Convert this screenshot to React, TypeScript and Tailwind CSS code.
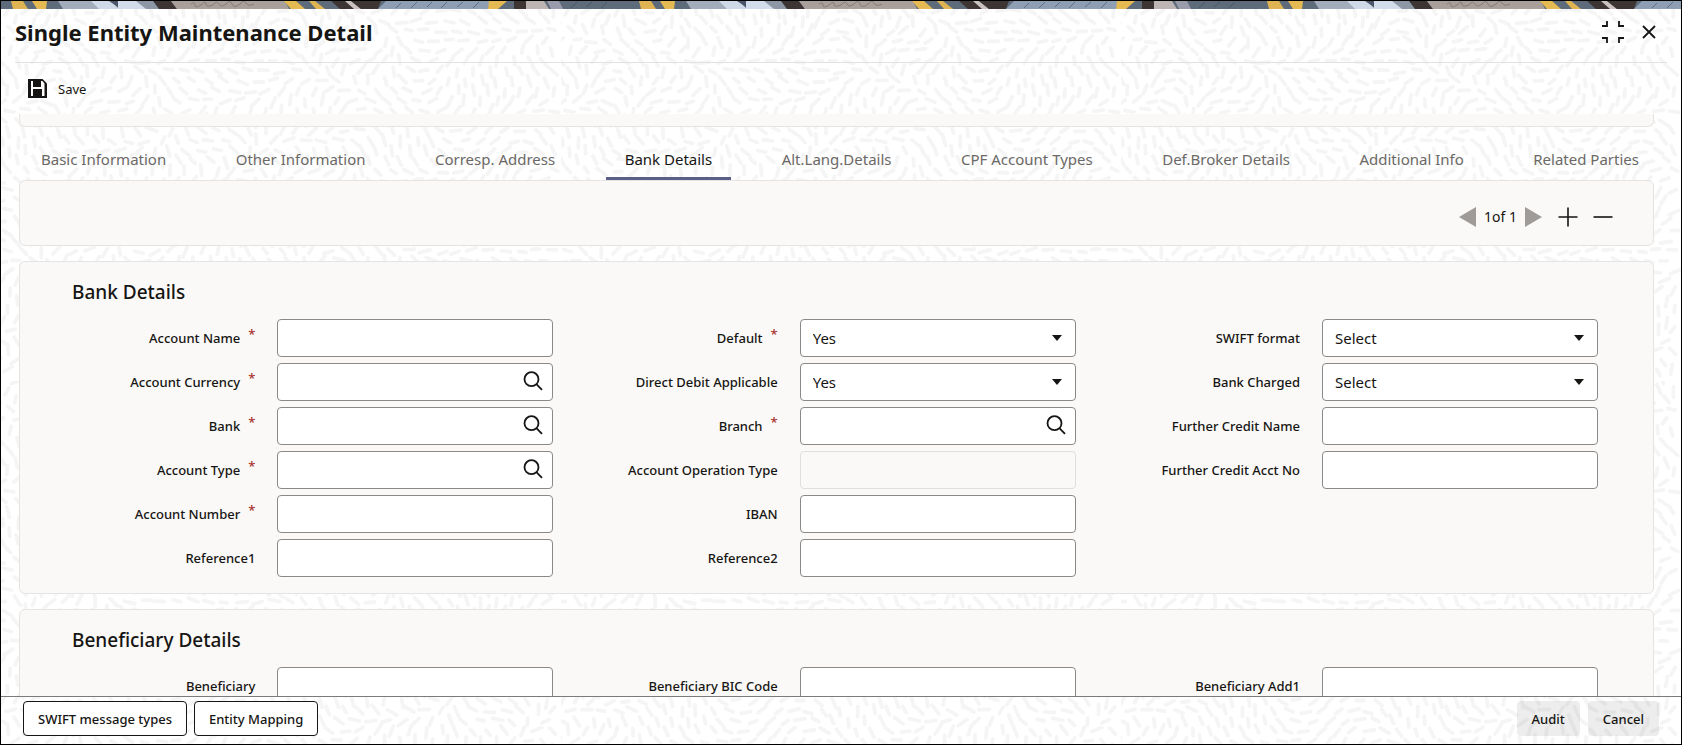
import { useId } from "react";
import type { ReactNode } from "react";

type FieldProps = {
  label: string;
  type?: "text" | "select" | "lookup";
  required?: boolean;
  disabled?: boolean;
  value?: string;
};

const tabs = [
  "Basic Information",
  "Other Information",
  "Corresp. Address",
  "Bank Details",
  "Alt.Lang.Details",
  "CPF Account Types",
  "Def.Broker Details",
  "Additional Info",
  "Related Parties",
];

const bankColumns: FieldProps[][] = [
  [
    { label: "Account Name", required: true },
    { label: "Account Currency", required: true, type: "lookup" },
    { label: "Bank", required: true, type: "lookup" },
    { label: "Account Type", required: true, type: "lookup" },
    { label: "Account Number", required: true },
    { label: "Reference1" },
  ],
  [
    { label: "Default", required: true, type: "select", value: "Yes" },
    { label: "Direct Debit Applicable", type: "select", value: "Yes" },
    { label: "Branch", required: true, type: "lookup" },
    { label: "Account Operation Type", disabled: true },
    { label: "IBAN" },
    { label: "Reference2" },
  ],
  [
    { label: "SWIFT format", type: "select", value: "Select" },
    { label: "Bank Charged", type: "select", value: "Select" },
    { label: "Further Credit Name" },
    { label: "Further Credit Acct No" },
  ],
];

const beneficiaryColumns: FieldProps[][] = [
  [{ label: "Beneficiary" }],
  [{ label: "Beneficiary BIC Code" }],
  [{ label: "Beneficiary Add1" }],
];

// short dashes that follow a slowly turning flow field, one tile
const TILE_W = 560;
const TILE_H = 380;

const buildDashes = () => {
  let d = "";
  let seed = 7;
  const rand = () => {
    seed = (seed * 16807) % 2147483647;
    return seed / 2147483647;
  };
  const tau = Math.PI * 2;
  for (let row = 0; row < 38; row++) {
    for (let col = 0; col < 35; col++) {
      const x = col * 16 + (row % 2) * 8 + rand() * 4 - 2;
      const y = row * 10 + rand() * 4 - 2;
      const u = (x / TILE_W) * tau;
      const v = (y / TILE_H) * tau;
      const a =
        1.3 * Math.sin(u * 2 + Math.cos(v * 2)) +
        1.2 * Math.cos(v * 3 + u) +
        0.6 * Math.sin(u * 4 - v * 2);
      const len = 3.5 + rand() * 2;
      const dx = Math.cos(a) * len;
      const dy = Math.sin(a) * len;
      d += `M${(x - dx).toFixed(1)} ${(y - dy).toFixed(1)}L${(x + dx).toFixed(1)} ${(y + dy).toFixed(1)}`;
    }
  }
  return d;
};

const dashes = buildDashes();

const Backdrop = () => (
  <svg className="absolute inset-0 -z-10 size-full" aria-hidden="true">
    <defs>
      <pattern id="dashes" width={TILE_W} height={TILE_H} patternUnits="userSpaceOnUse">
        <path d={dashes} stroke="#f5f5f5" strokeWidth="3.8" strokeLinecap="round" fill="none" />
      </pattern>
    </defs>
    <rect width="100%" height="100%" fill="url(#dashes)" />
  </svg>
);

const BrandStrip = () => (
  <svg className="block h-2 w-full shrink-0" aria-hidden="true">
    <defs>
      <pattern id="strip" width="628" height="8" patternUnits="userSpaceOnUse">
        <rect width="628" height="8" fill="#5d6b7a" />
        <path d="M10 0h12l5 8H12z" fill="#e0b452" />
        <path d="M31 0h15l-1 8h-9z" fill="#e5ba52" />
        <path d="M57 0h38l8 8H62z" fill="#a3acba" />
        <path d="M90 0h20l8 8h-20z" fill="#d0d9e8" />
        <path d="M108 0h9v6z" fill="#4b5569" />
        <path d="M117 0h22l9 8h-31z" fill="#d3dcea" />
        <path d="M135 0h18l8 8h-16z" fill="#8d97a5" />
        <path d="M152 0h18l6 8h-18z" fill="#3d3533" />
        <path d="M170 0h114l4 8H176z" fill="#aaa09b" />
        <path
          d="M190 3q4-3 4 1t6 0q5-5 5-1t7 1q4-5 6-1t7 0q4-5 6 0t8 0q4-5 6-1t8 1"
          stroke="#857b77"
          fill="none"
        />
        <path d="M283 0h12l9 8h-14z" fill="#e5ba52" />
        <path d="M308 0h6l10 8h-9z" fill="#e0b452" />
        <path d="M330 0h15l9 8h-15z" fill="#3d3533" />
        <path d="M344 0h6l10 8h-7z" fill="#c9c2c0" />
        <path d="M350 0h30l-3 8h-17z" fill="#3d3533" />
        <path d="M385 0h104l-2 8H377z" fill="#8f9fb3" />
        <path
          d="M395 7l5-5M410 7l6-6M426 6l5-5M440 7l6-6M456 6l6-5M472 7l6-6"
          stroke="#5f6f86"
        />
        <path d="M488 0h18l-9 8h-10z" fill="#e5ba52" />
        <path d="M513 0h12v8h-12z" fill="#3d3533" />
        <path d="M525 0h18l5 8h-23z" fill="#bdb5b3" />
        <path d="M546 0h12l4 8h-12z" fill="#9a9bab" />
        <path d="M570 7l6-6M585 6l6-5M600 7l6-6" stroke="#46566b" />
      </pattern>
    </defs>
    <rect width="100%" height="8" fill="url(#strip)" />
  </svg>
);

const SaveIcon = () => (
  <svg viewBox="0 0 19 19" className="size-[19px]" aria-hidden="true">
    <path d="M0 0h14.5L19 4.5V19H0z" fill="#161513" />
    <path d="M3 2h2v6h8V2h1.500l2 2.500V17H14v-7H5v7H3z" fill="#fff" />
  </svg>
);

const SearchIcon = () => (
  <svg viewBox="0 0 20 20" className="size-5" fill="none" stroke="#161513" strokeWidth="1.8">
    <circle cx="8.5" cy="8.2" r="7" />
    <path d="M13.4 13.2l5.6 5.6" />
  </svg>
);

const Field = ({ label, type = "text", required, disabled, value }: FieldProps) => {
  const id = useId();
  const box =
    "h-[38px] w-full rounded border border-[#8b8987] bg-white pl-3 text-[15px] text-[#161513] disabled:border-[#e1dfdd] disabled:bg-[#faf9f7]";

  return (
    <div className="grid grid-cols-[1fr_276px] items-center gap-x-[22px]">
      <label
        htmlFor={id}
        className="flex justify-end gap-2 text-[13px] leading-5 font-medium whitespace-nowrap text-[#161513]"
      >
        {label}
        {required && <span className="-mt-1 text-[#a8322a]">*</span>}
      </label>
      <div className="relative">
        {type === "select" ? (
          <>
            <select id={id} className={`${box} appearance-none`} defaultValue={value}>
              <option>{value}</option>
            </select>
            <svg
              viewBox="0 0 10 6"
              className="pointer-events-none absolute top-4 right-3.5 h-1.5 w-2.5"
              fill="#161513"
            >
              <path d="M0 0h10L5 6z" />
            </svg>
          </>
        ) : (
          <input id={id} type="text" className={box} disabled={disabled} />
        )}
        {type === "lookup" && (
          <button
            type="button"
            aria-label={`Search ${label}`}
            className="absolute top-2 right-2.5"
          >
            <SearchIcon />
          </button>
        )}
      </div>
    </div>
  );
};

const Card = ({ title, children }: { title: string; children: ReactNode }) => (
  <section className="mt-[15px] rounded-md border border-[#e6e4e2] bg-[#faf9f7] px-[33px] pb-4">
    <h2 className="px-[19px] pt-4 pb-[13px] text-[19px] leading-7 font-medium">{title}</h2>
    {children}
  </section>
);

const FieldGrid = ({ columns }: { columns: FieldProps[][] }) => (
  <div className="grid grid-cols-3">
    {columns.map((fields, index) => (
      <div key={index} className="flex flex-col gap-1.5 px-[22px]">
        {fields.map((field) => (
          <Field key={field.label} {...field} />
        ))}
      </div>
    ))}
  </div>
);

const App = () => {
  return (
    <div className="relative isolate flex h-screen flex-col overflow-hidden border border-black bg-white font-['Noto_Sans',sans-serif] text-[#161513]">
      <Backdrop />
      <BrandStrip />

      <header className="mx-3.5 flex h-[54px] shrink-0 items-center justify-between border-b border-[#e4e2e0] pr-[11px] pb-[7px]">
        <h1 className="text-[22px] leading-8 font-bold">Single Entity Maintenance Detail</h1>
        <div className="flex items-center gap-[18px]">
          <button type="button" aria-label="Exit full screen">
            <svg viewBox="0 0 22 22" className="size-[22px]" fill="none" stroke="#161513" strokeWidth="1.8">
              <path d="M0 5h5V0M22 5h-5V0M0 17h5v5M22 17h-5v5" />
            </svg>
          </button>
          <button type="button" aria-label="Close">
            <svg viewBox="0 0 14 14" className="size-3.5" fill="none" stroke="#161513" strokeWidth="1.8">
              <path d="M1 1l12 12M13 1L1 13" />
            </svg>
          </button>
        </div>
      </header>

      <div className="flex h-[51px] shrink-0 items-center px-[27px]">
        <button type="button" className="flex items-center gap-[11px] text-[13px] leading-5">
          <SaveIcon />
          Save
        </button>
      </div>

      <main className="min-h-0 flex-1 overflow-y-auto pr-[27px] pl-[18px] [scrollbar-width:none]">
        <div className="h-[13px] rounded-b-md border border-t-0 border-[#e6e4e2] bg-[#faf9f7]" />

        <nav role="tablist" className="-mr-1 flex justify-between pt-[15px] pl-[3px]">
          {tabs.map((tab) => (
            <button
              key={tab}
              type="button"
              role="tab"
              aria-selected={tab === "Bank Details"}
              className="border-b-3 border-transparent px-[19px] pt-1.5 pb-[7px] text-[15px] leading-[22px] whitespace-nowrap text-[#6b6966] aria-selected:border-[#5b5f85] aria-selected:text-[#161513]"
            >
              {tab}
            </button>
          ))}
        </nav>

        <div className="flex h-[66px] items-center justify-end rounded-md border border-[#e6e4e2] bg-[#faf9f7] pt-2 pr-10">
          <button type="button" aria-label="Previous">
            <svg viewBox="0 0 17 20" className="h-5 w-[17px]" fill="#9e9b99">
              <path d="M17 0v20L0 10z" />
            </svg>
          </button>
          <span className="mx-2 text-sm leading-5">1of 1</span>
          <button type="button" aria-label="Next">
            <svg viewBox="0 0 17 20" className="h-5 w-[17px]" fill="#9e9b99">
              <path d="M0 0v20l17-10z" />
            </svg>
          </button>
          <button type="button" aria-label="Add row" className="ml-4">
            <svg viewBox="0 0 20 20" className="size-5" stroke="#161513" strokeWidth="1.6">
              <path d="M10 .5v19M.5 10h19" />
            </svg>
          </button>
          <button type="button" aria-label="Delete row" className="ml-[15px]">
            <svg viewBox="0 0 20 20" className="size-5" stroke="#161513" strokeWidth="1.6">
              <path d="M.5 10h19" />
            </svg>
          </button>
        </div>

        <Card title="Bank Details">
          <FieldGrid columns={bankColumns} />
        </Card>

        <Card title="Beneficiary Details">
          <FieldGrid columns={beneficiaryColumns} />
        </Card>
      </main>

      <footer className="flex h-12 shrink-0 items-start justify-between border-t border-[#7d7b79] px-[22px] pt-1 text-[13px] leading-5 font-medium">
        <div className="flex gap-[7px]">
          <button type="button" className="h-[35px] rounded border border-[#161513] bg-white px-3.5">
            SWIFT message types
          </button>
          <button type="button" className="h-[35px] rounded border border-[#161513] bg-white px-3.5">
            Entity Mapping
          </button>
        </div>
        <div className="flex gap-2">
          <button type="button" className="h-[35px] rounded bg-black/7 px-[15px]">
            Audit
          </button>
          <button type="button" className="h-[35px] rounded bg-black/7 px-[15px]">
            Cancel
          </button>
        </div>
      </footer>
    </div>
  );
};

export default App;
